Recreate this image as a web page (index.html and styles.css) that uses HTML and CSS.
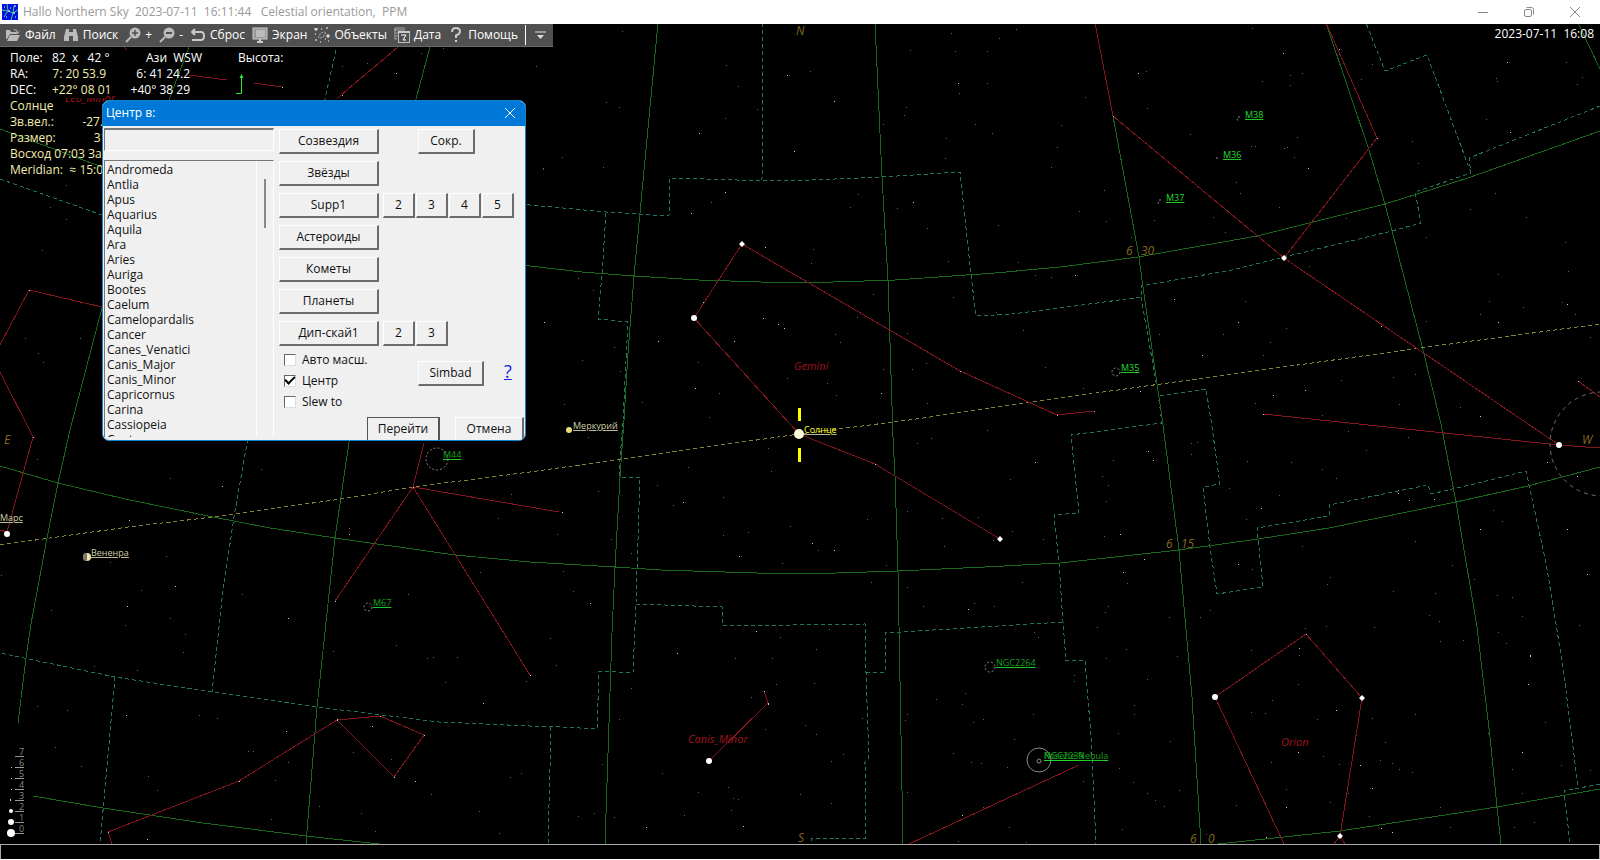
FILE: index.html
```html
<!DOCTYPE html>
<html lang="ru">
<head>
<meta charset="utf-8">
<title>Hallo Northern Sky</title>
<link rel="stylesheet" href="styles.css">
</head>
<body>
<div class="app">
  <header class="titlebar">
    <svg class="app-icon" viewBox="0 0 16 16" aria-hidden="true"><rect width="16" height="16" fill="#0010e0"/><path d="M0 6L6 7L11 9L16 6M2 13L6 7L5 0M11 9L9 16M11 9L12 2" fill="none" stroke="#3bd08c"/><path d="M2 3h1M6 7h2M11 9h2M12 2h2M4 13h1M13 13h1M8 4h1" stroke="#fff"/></svg>
    <h1 class="title">Hallo Northern Sky  2023-07-11  16:11:44   Celestial orientation,  PPM</h1>
    <div class="window-buttons">
      <button type="button" aria-label="Свернуть"><svg viewBox="0 0 12 12"><path d="M1 6.5h10"/></svg></button>
      <button type="button" aria-label="Развернуть"><svg viewBox="0 0 12 12"><rect x="1.5" y="3.5" width="7" height="7" rx="1.5"/><path d="M3.5 1.5h5a2 2 0 0 1 2 2v5"/></svg></button>
      <button type="button" aria-label="Закрыть"><svg viewBox="0 0 12 12"><path d="M1 1l10 10M11 1L1 11"/></svg></button>
    </div>
  </header>

  <main class="sky">
    <svg class="chart" viewBox="0 24 1600 820" preserveAspectRatio="xMidYMid slice" role="img" aria-label="Карта неба">
      <g class="line border">
        <path d="M342 23L325 99L247 443L234 517L223 590L212 692"/>
        <path d="M0 179L102 215L300 262L460 195L530 205L606 212L669 216L670 178L737 180L762 180L812 180L882 177L960 172L971 275L976 316L1012 314L1060 308L1141 297L1141 286L1232 270L1284 257L1392 231L1421 223L1415 192L1471 173L1469 158L1600 106"/>
        <path d="M1471 173L1427 55L1385 71L1366 23M763 23L762 180"/>
        <path d="M606 213L602 274L598 319L628 322L623 420L619 473L620 477L640 477L636 603L633 673L599 671L597 729L563 727L530 726L439 722L317 707L212 692L115 677L0 653M115 677L100 844M551 727L548 844"/>
        <path d="M636 604L722 607L723 626L865 624L866 673L869 758L865 762L866 838L834 838"/>
        <path d="M866 673L885 672L885 633L1063 622"/>
        <path d="M834 838L812 838L811 844"/>
        <path d="M1141 297L1158 393L1162 423L1071 435L1079 513L1054 515L1059 563L1063 622L1066 661L1085 660L1091 737L1096 844"/>
        <path d="M1160 396L1206 389L1211 420L1220 484L1203 487L1210 547L1217 594L1263 587L1257 528L1329 516L1329 505L1428 485L1431 494L1478 483L1526 471L1546 563L1563 667L1578 787M1600 784L1564 791L1570 844"/>
      </g>
      <g class="line grid">
        <path d="M196 23L189 47L169 100L102 308L70 430L58 483L47 538L31 624L26 658L18 723"/>
        <path d="M437 23L430 47L416 99L349 442L335 538L317 707L306 844"/>
        <path d="M658 23L634 276L628 353L624 420L620 477L615 567L612 633L605 844"/>
        <path d="M875 23L882 177L888 280L893 437L895 476L898 571L903 844"/>
        <path d="M1095 23L1113 116L1139 257L1143 287L1163 425L1179 550L1192 697L1201 844"/>
        <path d="M1326 23L1369 150L1385 204L1423 350L1441 424L1456 502L1477 627L1490 737L1497 807L1501 844M1578 23L1600 69"/>
        <path d="M0 129L102 167L300 225L530 266L582 272L634 276L699 280L761 282L833 282L895 280L995 273L1060 267L1138 257L1257 236L1385 204L1468 178L1600 131"/>
        <path d="M0 466L58 483L125 499L213 517L270 528L335 538L455 555L530 562L615 567L661 570L757 573L836 573L898 571L985 567L1060 563L1179 550L1258 539L1329 528L1456 502L1528 486L1600 467"/>
        <path d="M33 796L103 808L203 823L306 836L379 844M1218 844L1340 831L1497 807L1600 789"/>
      </g>
      <path class="line ecliptic" d="M0 545L128 527L213 517L341 499L413 487L530 472L799 434L909 420L1060 398L1420 348L1600 324"/>
      <g class="line figure">
        <path d="M123 46L127 50M189 75L227 80M254 83L282 87M425 23L398 47L341 95L337 99"/>
        <path d="M102 307L29 290L0 345M0 372L33 437L7 532L0 530"/>
        <path d="M424 443L413 487L335 601M413 487L530 507L559 512M413 487L530 675"/>
        <path d="M799 434L694 318L742 244L960 371L1057 415L1094 411M799 434L875 464L1000 539"/>
        <path d="M764 691L768 703L709 761M909 844L1079 765"/>
        <path d="M112 844L108 832L239 781L337 720L380 716L424 735L394 777L337 720"/>
        <path d="M1095 23L1113 116L1284 258L1559 445L1263 414M1559 445L1600 448M1326 23L1377 138L1284 258M1578 381L1600 397"/>
        <path d="M1284 844L1215 697L1306 634L1362 698L1340 836L1334 844M1340 836L1345 844"/>
      </g>
      <path id="faint-stars" class="faint"/>
      <path id="mid-stars" class="mid"/>
      <g class="bright">
        <path d="M742 241l3 3l-3 3l-3-3zM1284 255l3 3l-3 3l-3-3zM1000 536l3 3l-3 3l-3-3zM1362 695l3 3l-3 3l-3-3zM1340 833l3 3l-3 3l-3-3z"/>
        <circle cx="694" cy="318" r="3"/><circle cx="709" cy="761" r="3"/><circle cx="1215" cy="697" r="3"/><circle cx="1559" cy="445" r="3"/><circle cx="7" cy="534" r="3"/>
      </g>
      <g class="deep">
        <circle cx="437" cy="459" r="11"/><circle cx="368" cy="607" r="4"/><circle cx="990" cy="667" r="5"/>
        <circle cx="1116" cy="372" r="4"/><path d="M1240 117h-2l-1 2l1 2M1217 157v3M1161 200h-2l-1 2l1 2"/>
        <circle class="solid" cx="1039" cy="760" r="12"/><circle class="solid" cx="1039" cy="761" r="2"/>
        <circle class="cluster" cx="1602" cy="444" r="52"/>
      </g>
      <circle cx="87" cy="557" r="4" fill="#efe39a"/><path d="M87 553a4 4 0 0 0 0 8z" fill="#777"/>
      <circle cx="569" cy="430" r="3" fill="#ecdc80"/>
      <circle cx="799" cy="434" r="5" fill="#ffffdc"/>
      <path d="M799.5 408v13M799.5 448v14" stroke="#ffff00" stroke-width="3"/>

      <g class="label object">
        <text x="1245" y="118">M38</text><text x="1223" y="158">M36</text><text x="1166" y="201">M37</text><text x="1121" y="371">M35</text>
        <g class="dim"><text x="443" y="458">M44</text><text x="373" y="606">M67</text><text x="996" y="666">NGC2264</text><text x="1044" y="759">NGC2239</text><text x="1044" y="759">Rosette Nebula</text></g>
      </g>
      <g class="label planet"><text x="0" y="521">Марс</text><text x="91" y="556">Вененра</text><text x="573" y="429">Меркурий</text><text class="sun" x="804" y="433">Солнце</text></g>
      <g class="label constellation"><text x="65" y="102">Leo_Minor</text><text x="794" y="370">Gemini</text><text x="688" y="743">Canis_Minor</text><text x="1281" y="746">Orion</text></g>
      <g class="label mark"><text x="796" y="35">N</text><text x="798" y="842">S</text><text x="4" y="444">E</text><text x="1582" y="444">W</text><text x="1126" y="255">6</text><text x="1141" y="255">30</text><text x="1166" y="548">6</text><text x="1181" y="548">15</text><text x="1190" y="843">6</text><text x="1208" y="843">0</text></g>
      <g class="label scale"><text x="19" y="755">7</text><text x="19" y="766">6</text><text x="19" y="777">5</text><text x="19" y="788">4</text><text x="19" y="799">3</text><text x="19" y="810">2</text><text x="19" y="821">1</text><text x="19" y="832">0</text></g>
      <path class="line" stroke="#999" d="M15 756h9M15 767h9M15 778h9M15 789h9M15 800h9M15 811h9M15 822h9M15 833h9"/>
      <path class="mid" d="M11 767h1M11 778h1M11 789h1M10 799h1M10 800h1"/>
      <g fill="#fff"><circle cx="11" cy="811" r="2"/><circle cx="11" cy="822" r="3"/><circle cx="11" cy="833" r="4"/></g>
    </svg>

    <nav class="toolbar" aria-label="Панель инструментов">
      <button type="button"><svg viewBox="0 0 16 16"><path fill="#bbb" d="M1 3h4l1 2h6v2H5L2 12H1zM5 8h10l-3 6H2z"/><path d="M8 3q4-2 5 2l2-1-2 3-3-2h2Q11 3 8 3" fill="#aaa"/></svg>Файл</button>
      <button type="button"><svg viewBox="0 0 16 16"><path fill="#bbb" d="M3 2h3v3h4V2h3l2 8v4h-5V9H6v5H1v-4z"/></svg>Поиск</button>
      <button type="button"><svg viewBox="0 0 16 16"><path d="M1 15l5-5" stroke="#bbb" stroke-width="2"/><circle cx="10" cy="6" r="5.5" fill="#bbb"/><path d="M7 6h6M10 3v6" stroke="#505050" stroke-width="1.5"/></svg>+</button>
      <button type="button"><svg viewBox="0 0 16 16"><path d="M1 15l5-5" stroke="#bbb" stroke-width="2"/><circle cx="10" cy="6" r="5.5" fill="#bbb"/><path d="M7 6h6" stroke="#505050" stroke-width="2"/></svg>-</button>
      <button type="button"><svg viewBox="0 0 16 16"><path d="M5 2L2 5l3 3M2 5h9q3 0 3 4t-3 4H2" fill="none" stroke="#c8c8c8" stroke-width="2"/></svg>Сброс</button>
      <button type="button"><svg viewBox="0 0 16 16"><rect x="1" y="1" width="14" height="11" fill="#999" stroke="#ccc"/><rect x="4" y="3" width="9" height="7" fill="#bbb"/><path d="M8 12v3M5 15h6" stroke="#ccc" stroke-width="2"/></svg>Экран</button>
      <button type="button"><svg viewBox="0 0 16 16"><path d="M2 1v3M0 2h4M13 0v2M14 7v4M12 9h4M2 12v2M1 7h1M7 2h1M14 14h1M6 15h1M11 12h1" stroke="#fff"/><ellipse cx="8" cy="8" rx="4" ry="2" transform="rotate(-40 8 8)" fill="none" stroke="#aaa" stroke-dasharray="2 1"/></svg>Объекты</button>
      <button type="button"><svg viewBox="0 0 16 16"><path d="M11 1H1v11h2M0 3h11M4 6H2m0 3h2" fill="none" stroke="#aaa"/><rect x="4.500" y="4.500" width="11" height="11" fill="#505050" stroke="#bbb"/><path d="M4 5h12" stroke="#ccc" stroke-width="2"/><path d="M7 8h5l-3 5h3" fill="none" stroke="#fff"/></svg>Дата</button>
      <button type="button"><svg viewBox="0 0 16 16"><path d="M4 5q0-4 4-4t4 3.500Q12 7 8 8.500V11M8 13v2" fill="none" stroke="#ccc" stroke-width="2"/></svg>Помощь</button>
      <button type="button" class="more" aria-label="Ещё"><svg viewBox="0 0 16 16"><path d="M3 5h11" stroke="#ddd"/><path d="M5 8h7l-3.500 4z" fill="#ddd"/></svg></button>
    </nav>
    <time class="clock">2023-07-11  16:08</time>

    <section class="info" aria-label="Данные поля">
      <div class="row"><span class="key">Поле:</span><span class="value">82  x   42 °</span><span class="azimuth">Ази  WSW</span><span class="altitude">Высота:</span></div>
      <div class="row"><span class="key">RA:</span><span class="value warm">7: 20 53.9</span><span class="second">6: 41 24.2</span></div>
      <div class="row"><span class="key">DEC:</span><span class="value warm">+22° 08 01</span><span class="second">+40° 38 29</span></div>
      <div class="row warm">Солнце</div>
      <div class="row warm"><span class="key">Зв.вел.:</span><span class="value wide">-27.0</span></div>
      <div class="row warm"><span class="key">Размер:</span><span class="value wide">31'</span></div>
      <div class="row warm">Восход 07:03 Захо</div>
      <div class="row warm"><span class="key">Meridian:</span><span class="value wide">≈ 15:00</span></div>
      <svg class="pointer" viewBox="0 0 8 20" aria-hidden="true"><path d="M5.500 2v17.500H0" fill="none" stroke="#30e830"/><path d="M5.500 0l2 4h-4z" fill="#30e830"/></svg>
    </section>

    <form class="dialog" role="dialog" aria-labelledby="dialog-title">
      <div class="dialog-head">
        <h2 id="dialog-title">Центр в:</h2>
        <button type="button" aria-label="Закрыть"><svg viewBox="0 0 12 12"><path d="M1 1l10 10M11 1L1 11"/></svg></button>
      </div>
      <div class="dialog-body">
        <div class="picker">
          <input class="search" type="text" aria-label="Название объекта">
          <div class="list-frame">
            <ul class="list">
              <li>Andromeda</li><li>Antlia</li><li>Apus</li><li>Aquarius</li><li>Aquila</li><li>Ara</li><li>Aries</li><li>Auriga</li><li>Bootes</li><li>Caelum</li><li>Camelopardalis</li><li>Cancer</li><li>Canes_Venatici</li><li>Canis_Major</li><li>Canis_Minor</li><li>Capricornus</li><li>Carina</li><li>Cassiopeia</li><li>Centaurus</li>
            </ul>
            <div class="scroll"><div class="thumb"></div></div>
          </div>
        </div>
        <div class="choices">
          <div class="line-row"><button type="button" class="btn main">Созвездия</button><button type="button" class="btn short">Сокр.</button></div>
          <div class="line-row"><button type="button" class="btn main">Звёзды</button></div>
          <div class="line-row"><button type="button" class="btn main">Supp1</button><div class="numbers"><button type="button" class="btn">2</button><button type="button" class="btn">3</button><button type="button" class="btn">4</button><button type="button" class="btn">5</button></div></div>
          <div class="line-row"><button type="button" class="btn main">Астероиды</button></div>
          <div class="line-row"><button type="button" class="btn main">Кометы</button></div>
          <div class="line-row"><button type="button" class="btn main">Планеты</button></div>
          <div class="line-row"><button type="button" class="btn main">Дип-скай1</button><div class="numbers"><button type="button" class="btn">2</button><button type="button" class="btn">3</button></div></div>
          <div class="options">
            <div class="checks">
              <label><input type="checkbox">Авто масш.</label>
              <label><input type="checkbox" checked>Центр</label>
              <label><input type="checkbox">Slew to</label>
            </div>
            <button type="button" class="btn simbad">Simbad</button>
            <a class="help" href="#help">?</a>
          </div>
          <div class="actions"><button type="submit" class="btn go">Перейти</button><button type="button" class="btn cancel">Отмена</button></div>
        </div>
      </div>
    </form>
  </main>
  <footer class="status"></footer>
</div>
<script src="stars.js"></script>
</body>
</html>
```
FILE: styles.css
```css
* { box-sizing: border-box; }
body {
  margin: 0;
  font-family: "Open Sans", "Noto Sans", sans-serif;
  font-size: 12px;
  line-height: 16px;
  color: #fff;
  background: #000;
}
button { font: inherit; color: inherit; background: none; border: 0; padding: 0; }
.app { display: flex; flex-direction: column; min-height: 100vh; }

.titlebar { display: flex; align-items: center; height: 24px; padding-left: 2px; background: #fff; color: #999; }
.app-icon { width: 16px; height: 16px; }
.title { flex: 1; margin: 0 0 0 5px; font-size: 12px; font-weight: 400; white-space: pre; }
.window-buttons { display: flex; padding-right: 2px; }
.window-buttons button { display: grid; place-items: center; width: 46px; height: 20px; }
.window-buttons svg { width: 12px; height: 12px; fill: none; stroke: #888; }

.sky { position: relative; flex: 1; overflow: hidden; background: #000; }
.chart { position: absolute; inset: 0; width: 100%; height: 100%; }
.line { fill: none; shape-rendering: crispEdges; }
.border { stroke: #22735f; stroke-dasharray: 4 3; }
.grid { stroke: #18681c; }
.ecliptic { stroke: #85853a; stroke-dasharray: 4 3; }
.figure { stroke: #84151c; }
.faint, .mid { fill: none; shape-rendering: crispEdges; }
.faint { stroke: #626262; }
.mid { stroke: #c8c8c8; }
.bright { fill: #fff; }
.deep { fill: none; stroke: #8a8a8a; stroke-dasharray: 2 2; }
.deep .solid { stroke-dasharray: none; }
.deep .cluster { stroke: #707070; stroke-dasharray: 4 4; }
.label { font-size: 12px; }
.object { font-size: 9px; fill: #22dd2c; text-decoration: underline; }
.dim { fill: #16a01e; }
.planet { font-size: 9px; fill: #d2cfaa; text-decoration: underline; }
.sun { fill: #ffff20; }
.constellation { font-size: 11px; font-style: italic; fill: #a0141c; }
.mark { font-style: italic; fill: #80691c; }
.scale { font-size: 9px; fill: #888; }

.toolbar { position: absolute; top: 0; left: 0; display: flex; height: 23px; padding-left: 5px; background: #505050; border-bottom: 1px solid #6a6a6a; }
.toolbar button { display: flex; align-items: center; gap: 4px; padding-right: 7px; }
.toolbar svg { width: 16px; height: 16px; }
.toolbar .more { margin: 1px 0; padding: 0 5px 0 6px; border-left: 1px solid #fff; }
.clock { position: absolute; top: 2px; right: 6px; white-space: pre; }

.info { position: absolute; top: 26px; left: 10px; display: flex; flex-direction: column; white-space: pre; }
.row { display: flex; height: 16px; }
.key { width: 42px; }
.value { width: 54px; text-align: right; background: #000; }
.wide { width: 58px; background: none; }
.second { width: 84px; text-align: right; }
.azimuth { width: 96px; text-align: right; }
.altitude { margin-left: 36px; }
.warm { color: #f4eeb0; }
.pointer { position: absolute; top: 24px; left: 226px; width: 8px; height: 20px; }

.dialog { position: absolute; top: 76px; left: 102px; width: 424px; overflow: hidden; color: #111; background: #f0f0f0; border: 1px solid #1583cc; border-radius: 7px; }
.dialog-head { display: flex; align-items: center; justify-content: space-between; height: 25px; padding: 0 9px 1px 3px; color: #fff; background: #0078d7; }
.dialog-head h2 { margin: 0; font-size: 12px; font-weight: 400; }
.dialog-head svg { display: block; width: 12px; height: 12px; stroke: #fff; }
.dialog-body { display: flex; height: 314px; padding: 2px 0 0 1px; }
.picker { display: flex; flex-direction: column; gap: 9px; width: 170px; }
.search { height: 23px; background: #f0f0f0; border: 1px solid #fff; border-top: 2px solid #777; border-left-color: #777; }
.list-frame { display: flex; flex: 1; min-height: 0; margin-bottom: 3px; border-top: 1px solid #777; border-left: 1px solid #777; border-right: 1px solid #fff; }
.list { flex: 1; margin: 0; padding: 1px 0 0 2px; overflow: hidden; list-style: none; line-height: 15px; }
.scroll { width: 17px; padding: 18px 7px 0 7px; border-left: 1px solid #fff; }
.thumb { height: 49px; background: #888; }
.choices { display: flex; flex-direction: column; flex: 1; gap: 7px; padding: 1px 0 0 5px; }
.line-row { display: flex; gap: 4px; }
.btn { flex-shrink: 0; height: 25px; background: #f0f0f0; border: 1px solid #fff; border-right: 2px solid #6c6c6c; border-bottom: 2px solid #6c6c6c; }
.main { width: 100px; }
.short { width: 57px; margin-left: 35px; }
.numbers { display: flex; gap: 1px; }
.numbers .btn { width: 32px; }
.options { display: flex; height: 63px; margin-top: -4px; padding-left: 5px; }
.checks { display: flex; flex-direction: column; width: 134px; }
.checks label { display: flex; align-items: center; gap: 6px; height: 21px; }
.checks input { display: grid; place-items: center; width: 12px; height: 12px; margin: 0; appearance: none; background: #fff; border: 1px solid #ddd; border-top-color: #666; border-left-color: #666; }
.checks input:checked::before { content: ""; width: 8px; height: 4px; margin-bottom: 3px; border-left: 2px solid #000; border-bottom: 2px solid #000; transform: rotate(-45deg); }
.simbad { width: 66px; margin-top: 12px; }
.help { margin: 12px 0 0 20px; color: #1a1ae0; font-size: 18px; line-height: 20px; }
.actions { display: flex; gap: 15px; margin-top: -2px; padding-left: 88px; }
.go { width: 73px; border: 1px solid #555; border-right-width: 2px; border-bottom-width: 2px; }
.cancel { width: 69px; }

.status { height: 16px; background: #000; border: 1px solid #aaa; border-bottom-color: #fff; }
```
FILE: stars.js
```js
// Star positions in chart coordinates, as x,y pairs.
const mid = "787,75 834,101 913,202 734,341 778,324 784,328 765,247 695,388 881,393 544,322 658,341 794,151 699,133 958,83 725,192 691,213 703,302 763,318 1138,73 1283,53 1339,49 1507,62 1510,132 1308,168 1075,275 1174,299 1567,304 1498,322 1381,326 1238,322 1202,355 1273,395 1305,390 1140,391 1480,416 1377,138 1113,116 1263,414 1094,411 1057,415 960,371 875,464 1035,462 812,543 968,609 739,556 834,550 562,512 590,603 677,653 756,631 683,502 768,703 768,704 764,691 962,815 743,826 646,827 1153,460 1148,451 1144,559 1123,572 1120,534 1261,508 1238,564 1398,493 1409,500 1434,499 1480,529 1567,529 1577,476 1547,462 1530,655 1530,656 1528,684 1299,648 1306,634 1336,710 1298,752 1360,765 1522,752 1372,788 1381,828 1392,832 1266,837 1286,807 127,606 175,586 288,618 129,520 222,486 349,534 335,601 413,487 530,675 483,703 372,726 286,731 126,715 239,781 337,720 337,719 380,716 424,735 394,777 415,781 147,839 108,832 33,437 29,290 282,87 342,95 396,73 1587,574 1578,381";
const faint = "910,50 959,93 904,115 906,107 955,51 951,33 987,51 1016,29 999,38 810,71 738,86 725,118 726,65 606,102 619,107 562,157 543,169 603,167 757,109 711,202 883,124 975,124 987,83 992,133 946,138 945,158 1061,125 1057,147 1051,167 858,194 850,207 897,208 881,234 927,228 998,225 813,249 811,263 873,294 948,261 953,297 1051,277 1035,275 1018,262 835,334 840,342 857,317 907,333 996,312 1023,330 698,362 709,417 719,393 787,378 827,383 836,395 883,369 912,369 926,363 927,403 582,360 620,371 614,347 564,404 578,278 593,290 642,402 1045,367 622,31 1252,28 1146,71 1262,81 1290,75 1302,73 1290,85 1361,79 1372,64 1496,78 1497,81 1582,77 1577,84 1566,62 1486,119 1085,97 1147,108 1190,134 1297,137 1287,147 1294,157 1284,148 1251,146 1255,146 1236,182 1240,193 1279,207 1104,190 1079,211 1106,221 1213,217 1225,232 1131,237 1154,220 1245,301 1309,266 1346,218 1418,163 1412,141 1470,209 1495,193 1526,217 1426,237 1565,242 1568,271 1498,274 1562,302 1575,314 1523,307 1489,301 1480,314 1426,321 1286,328 1159,334 1223,334 1270,342 1263,355 1341,380 1255,403 1322,415 1393,377 1415,374 1083,388 1460,407 1590,337 1399,404 818,550 974,603 923,606 994,606 782,563 748,532 723,535 790,526 673,505 723,497 688,467 771,471 768,448 657,485 598,491 631,553 780,637 735,658 772,658 816,649 829,629 550,638 556,665 631,688 776,684 751,697 814,683 765,729 805,725 816,734 862,718 905,720 907,714 936,699 965,693 962,704 1033,714 983,719 973,722 843,754 831,761 831,803 800,794 728,787 698,792 733,798 738,799 731,810 684,815 594,813 614,817 578,816 602,764 662,773 619,719 907,792 971,762 981,763 953,753 1014,739 1007,767 1009,827 983,807 958,841 1026,842 1012,531 993,540 978,517 944,546 942,518 907,511 867,519 886,565 1022,582 987,430 931,438 917,443 1010,479 1043,539 907,587 871,582 611,539 557,534 563,571 573,591 1038,637 1034,632 588,437 1191,443 1197,442 1191,454 1113,460 1102,476 1108,485 1106,501 1104,536 1127,583 1108,606 1105,612 1097,627 1126,649 1106,658 1177,656 1169,617 1200,617 1210,610 1247,461 1291,462 1322,469 1336,478 1366,450 1408,437 1348,431 1279,495 1246,519 1229,488 1493,510 1502,521 1415,541 1302,546 1252,569 1330,577 1327,584 1393,591 1435,593 1452,565 1474,579 1497,595 1512,597 1522,616 1429,615 1439,621 1440,641 1463,640 1498,632 1506,643 1579,625 1299,655 1305,628 1326,626 1374,627 1251,650 1298,684 1317,719 1272,700 1251,712 1265,713 1323,756 1339,764 1385,742 1372,718 1415,714 1380,760 1399,769 1412,772 1392,763 1348,793 1330,802 1369,816 1286,789 1271,762 1236,805 1134,705 1134,714 1118,733 1147,679 1170,741 1074,675 1074,681 1119,768 1133,782 1147,793 1155,800 1179,790 1164,806 1083,781 1122,829 1206,834 1545,722 1512,769 1522,793 1561,765 1590,770 1440,807 1450,827 1514,827 1534,822 1488,733 170,478 261,469 349,528 166,556 141,590 242,594 51,610 185,634 170,618 125,625 183,652 94,666 137,670 333,651 408,594 480,572 498,518 511,494 396,645 427,658 433,657 457,657 445,682 526,681 67,710 37,706 55,747 81,766 148,776 157,790 248,751 253,751 288,762 275,780 431,794 479,811 510,777 521,773 271,819 319,806 361,813 375,831 499,833 199,715 217,718 391,759 353,752 37,459 1,575 110,562 66,185 50,207 66,219 42,250 25,338 38,353 43,362 80,338 367,63 342,66 536,66 421,53 443,48 543,168";
const draw = (id, list) => {
  const d = list.split(" ").map(p => "M" + p + "h1").join("");
  document.getElementById(id).setAttribute("d", d);
};
draw("faint-stars", faint);
draw("mid-stars", mid);
```
